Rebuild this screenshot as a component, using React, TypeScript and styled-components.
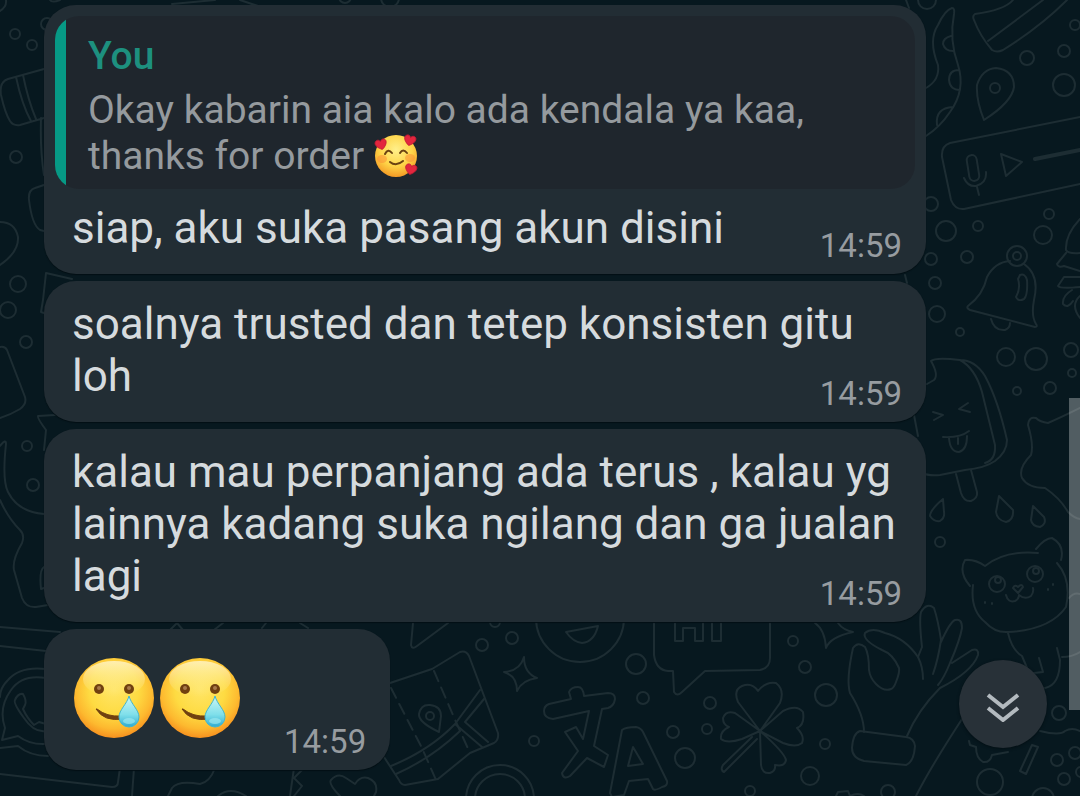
import React from "react";
import styled, { createGlobalStyle } from "styled-components";

const GlobalStyle = createGlobalStyle`
  *, *::before, *::after { box-sizing: border-box; }
  html, body { margin: 0; padding: 0; background: #07181f; }
  body { font-family: Roboto, "Noto Sans", sans-serif; overflow-x: hidden; }
`;

const Page = styled.div`
  position: relative;
  min-height: 100vh;
  overflow: hidden;
  background: #07181f;
`;

const Wallpaper = styled.svg`
  position: absolute;
  top: 0;
  left: 0;
  fill: none;
  stroke: #1d2d33;
  stroke-width: 2;
  stroke-linecap: round;
  stroke-linejoin: round;
`;

const Conversation = styled.main`
  position: relative;
  display: flex;
  flex-direction: column;
  align-items: flex-start;
  gap: 7px;
  padding: 5px 154px 26px 44px;
`;

const Bubble = styled.article`
  max-width: 100%;
  border-radius: 32px;
  background: #222d34;
  box-shadow: 0 1px 1px #030f14;
`;

const Quote = styled.blockquote`
  margin: 11px 11px 0;
  padding: 17px 22px 10px 33px;
  border-radius: 24px;
  background: linear-gradient(to right, #069985 11px, #1f262d 11px);
`;

const Author = styled.cite`
  display: block;
  font-style: normal;
  font-weight: 500;
  font-size: 39px;
  line-height: 46px;
  margin-bottom: 8px;
  color: #1d907f;
`;

const QuoteText = styled.p`
  margin: 0;
  font-size: 39px;
  line-height: 46px;
  color: #959a9e;
`;

const Text = styled.p<{ $afterQuote?: boolean }>`
  display: flow-root;
  margin: 0;
  padding: ${(p) => (p.$afterQuote ? 13 : 17)}px 24px 8px 28px;
  font-size: 44px;
  line-height: 52px;
  color: #d6dbde;
`;

const Time = styled.time<{ $floating?: boolean }>`
  float: ${(p) => (p.$floating ? "right" : "none")};
  margin-top: ${(p) => (p.$floating ? 24 : 0)}px;
  font-size: 33px;
  line-height: 40px;
  color: #979ca0;
`;

const EmojiBody = styled.div`
  display: flex;
  align-items: flex-end;
  gap: 44px;
  padding: 29px 24px 8px 30px;
`;

const EmojiRow = styled.div`
  display: flex;
  gap: 6px;
  margin-bottom: 24px;
`;

const InlineEmoji = styled.svg`
  display: inline-block;
  vertical-align: -9px;
`;

const ScrollThumb = styled.div`
  position: absolute;
  top: 398px;
  right: 0;
  width: 11px;
  height: 312px;
  background: rgba(255, 255, 255, 0.3);
`;

const JumpButton = styled.button`
  position: absolute;
  right: 33px;
  bottom: 48px;
  width: 88px;
  height: 88px;
  display: grid;
  place-items: center;
  padding: 0;
  border: 0;
  border-radius: 50%;
  background: #283138;
  box-shadow: 0 1px 3px #030f14;
  cursor: pointer;
`;

const dots: [number, number, number][] = [
  [15, 34, 5], [32, 45, 5], [16, 157, 6], [18, 284, 8], [8, 310, 8], [26, 342, 6],
  [27, 446, 5], [33, 485, 6], [47, 24, 6], [345, -3, 6], [390, -2, 9],
  [482, 645, 6], [495, 622, 5], [512, 638, 6], [636, 664, 10], [643, 698, 6],
  [710, 703, 6], [673, 732, 6], [707, 729, 5], [685, 758, 10], [534, 741, 5],
  [793, 641, 5], [805, 667, 6], [826, 695, 11], [825, 744, 5], [810, 776, 9],
  [750, 791, 5], [888, 792, 7], [990, 782, 13], [1059, 713, 7], [1057, 760, 6],
  [1075, 753, 6], [1064, 779, 6], [1081, 772, 5], [1043, 799, 11],
  [940, 542, 5], [946, 231, 10], [978, 226, 5], [1049, 214, 5], [1043, 235, 9],
  [967, 257, 6], [931, 259, 6], [935, 283, 6], [937, 314, 8], [960, 332, 4],
  [1006, 357, 9], [1036, 359, 11], [1071, 350, 7], [1072, 373, 4], [1050, 388, 6],
  [1017, 391, 4], [931, 204, 7], [927, 0, 9], [1075, 25, 5], [1027, 58, 7],
  [1064, 51, 6], [1064, 85, 11],
];

const doodles: string[] = [
  // left edge: barrel, blobs, paper corners, ghost
  "M6 0Q7 8 -2 12M44 69L8 79Q-1 82 1 95Q5 113 10 121Q13 126 20 125L44 118M16 77Q22 105 31 121M23 75Q28 100 36 119M41 118Q40 150 44 175",
  "M44 185L35 188Q28 190 29 200Q32 225 40 230L44 231M0 222Q15 222 18 237Q19 252 0 265M43 300L46 273L72 279M43 300L41 312L44 313",
  "M0 347Q5 346 7 350L25 397Q27 404 20 409Q10 415 0 418M55 415L38 416Q37 418 46 430L44 450",
  "M0 446Q6 438 6 444Q2 480 8 492Q18 512 44 514M0 500Q8 518 20 530Q25 535 22 543Q12 560 14 570L22 598Q26 608 36 607L48 605M44 567Q39 570 41 589L44 588",
  // phone bubble in the lower left corner
  "M0 627L60 632M0 646L46 651M46 669Q20 666 8 680Q0 688 0 697M46 678Q22 674 11 690Q-2 708 5 728L2 740L18 736Q30 745 46 744M0 748L18 746Q30 756 48 756",
  "M46 731Q34 733 24 718Q13 703 15 700Q18 693 23 694Q27 701 25 705L23 709Q27 718 34 725L39 722L46 724",
  "M0 774L112 787Q118 787 118 782L120 768M134 768L132 796M215 768Q210 782 200 784Q178 780 172 788L168 796M218 796Q230 786 246 796M294 768L290 796M302 770L294 778L302 786L294 796",
  "M340 796Q328 784 331 780Q338 772 346 778L355 784Q360 776 368 778Q378 782 376 792L374 796",
  "M170 630L177 623L183 630M214 630L223 623M262 628L266 623M300 623L308 628M172 4L215 0M240 0L258 6M50 0Q52 3 60 0",
  // folded map
  "M413 623L411 645Q412 650 417 646L448 623M390 683L432 669L460 652Q466 650 469 656L498 733Q499 740 494 743L470 753L438 779L405 785Q401 785 399 780L384 757",
  "M391 766Q430 750 455 724L480 690M396 774Q432 758 460 731M484 699L465 722L488 742M455 724L482 747",
  "M439 732Q418 722 419 714Q421 704 430 705Q441 706 441 716Z",
  // sparkle, laughing face, greeting bubble
  "M524 657Q524 673 537 678Q522 680 517 691Q517 676 504 672Q520 671 524 657Z",
  "M566 632L598 626Q594 642 582 643Q573 642 566 632Z",
  "M654 623V655Q656 670 668 671H673L674 692Q677 697 682 692L705 671L760 670Q770 668 770 658V623M675 623V641H683V628H695V641H703V623M712 623V641H721V623",
  // translation glyphs
  "M571 699L569 692Q571 687 578 687Q583 687 584 696L608 693Q615 693 615 699Q614 706 608 708L602 709L594 746L608 755L604 767L587 758L570 776Q563 780 562 773L578 751L565 732L576 727L583 739L589 711L553 719Q544 718 544 711Q544 706 549 704Z",
  "M622 730Q626 727 636 727Q641 728 643 732L667 781Q668 786 662 787Q655 791 653 789L648 779L629 781L624 795L612 797L610 793ZM633 747L628 766L643 764Z",
  // clover
  "M760 731L738 702Q733 690 742 686Q752 682 758 691Q766 681 776 683Q785 690 780 703ZM760 731L783 711Q797 704 803 712Q805 725 797 728Q805 736 802 743Q796 748 783 743ZM760 731L735 713Q726 710 723 718Q723 725 729 727Q720 731 721 739Q727 744 742 739ZM760 731L761 765Q762 774 770 773Q776 771 775 765Q785 767 786 760Q784 752 760 731ZM757 739L724 772Q720 770 723 765L752 737",
  "M815 623Q825 630 826 648Q830 637 853 632Q843 630 838 623",
  // OK hand
  "M864 732Q864 715 850 693Q846 680 853 648Q858 641 865 647Q869 654 869 670Q870 678 876 684Q884 692 891 689Q894 688 896 682Q900 672 899 668Q893 654 882 650Q862 640 865 633Q872 627 885 633Q905 638 918 657Q923 667 923 679",
  "M918 657L922 647Q919 620 921 612Q927 602 934 608Q938 620 941 640Q938 660 933 674M941 642Q950 622 955 620Q962 618 962 628Q960 640 950 663Q944 678 938 685M952 663L972 650Q979 648 978 655Q972 672 940 688Q918 710 907 736",
  "M860 731L906 737Q914 738 915 746Q914 762 906 765L864 761Q852 758 852 748Q853 733 860 731ZM916 796Q930 768 964 716",
  "M969 741L970 745L976 747Q976 758 983 762Q990 763 992 755L1008 752M1040 731Q1060 736 1065 731Q1072 727 1080 731M1032 745L1038 747L1026 774L1020 771Z",
  "M836 796L838 792L848 791L850 796Q858 792 864 796",
  // cat
  "M973 585Q970 610 985 622Q995 633 1008 632Q1050 630 1066 607Q1072 580 1057 563M985 566Q975 559 965 560Q958 572 970 586M985 566Q1005 550 1038 553M1036 549Q1045 538 1052 538Q1065 545 1061 560",
  "M1018 593L1013 588Q1015 584 1018 587Q1022 583 1023 587ZM1006 595Q1008 603 1015 601Q1019 599 1019 595Q1025 600 1031 596Q1034 592 1033 588M985 602V603M992 603V604M1048 589V590M1053 584V585",
  "M1008 633Q1012 650 1022 656L1030 675M1057 648L1060 660Q1060 685 1045 688M1039 658L1043 672L1034 673M1062 657Q1072 657 1080 652M1069 598Q1074 592 1080 594",
  // ice lolly
  "M931 361Q935 357 960 360Q975 368 982 392L995 445Q996 460 985 463M960 360Q975 360 985 376Q998 400 1007 440Q1007 452 995 461Q985 468 965 470L940 475Q928 476 922 473M931 361Q939 375 934 380L927 384M914 415L918 436",
  "M933 412L943 415L934 420M968 403L959 409L970 412M943 437Q960 438 969 431M949 438Q950 452 959 452Q967 450 967 436M958 438V444M956 474L961 493Q964 502 971 501Q978 498 977 492L971 470",
  "M943 499Q930 510 930 516Q934 522 940 521Q945 518 944 512ZM999 496L1013 510Q1014 520 1006 522Q997 520 996 512ZM1033 506L1044 517Q1047 524 1040 527Q1032 526 1031 520Z",
  "M1080 408Q1060 418 1048 423Q1040 422 1036 418Q1029 416 1028 425Q1034 445 1031 455Q1018 468 1022 478Q1028 488 1045 488Q1060 498 1068 512Q1074 518 1080 519",
  // bell
  "M1010 261Q995 262 987 277Q983 295 968 306Q966 308 970 310L1035 327Q1038 327 1036 324Q1031 316 1034 300Q1040 275 1024 264M1020 275Q1025 273 1027 280Q1028 295 1024 299Q1018 302 1016 297Q1021 288 1018 279ZM991 319Q994 331 1005 330Q1010 328 1010 323",
  "M1080 219Q1065 235 1066 250Q1068 254 1080 253M1066 253L1057 264Q1058 268 1064 266L1080 271M1080 277H1064L1058 286Q1060 289 1080 287M1072 290Q1062 296 1063 304Q1068 309 1073 301M1080 296Q1070 305 1080 318M905 275L907 283",
  // tentacle, pen, pin
  "M926 88Q940 80 938 65Q928 40 938 25Q945 10 952 8Q955 8 954 14Q949 40 958 65Q966 90 950 112Q940 127 926 136M951 36Q943 38 943 44Q945 51 953 51M959 70Q949 70 949 80Q950 90 960 90M953 107Q935 108 937 125",
  "M1013 0Q1005 10 975 14Q972 16 974 20Q980 36 992 50Q997 53 1003 50Q1040 27 1067 0M988 41L1043 0M984 120Q976 100 977 85Q982 69 996 68Q1014 70 1014 87Q1012 102 984 120ZM906 0L909 8",
  // voice note
  "M1080 117L950 143Q941 146 942 157L951 200Q955 210 964 209L1080 184M964 178Q968 187 976 186Q987 183 986 172M977 187L979 195M1001 154L1022 162L1006 176Z",
];

function WallpaperArt() {
  return (
    <Wallpaper width="1080" height="796" viewBox="0 0 1080 796" aria-hidden="true">
      {dots.map(([x, y, r]) => (
        <circle key={`${x}-${y}`} cx={x} cy={y} r={r} />
      ))}
      {doodles.map((d) => (
        <path key={d} d={d} />
      ))}
      <path d="M434 671L456 722L470 753M391 688L422 748L436 780" strokeDasharray="11 7" />
      <circle cx="430" cy="716" r="4" />
      <circle cx="500" cy="799" r="34" />
      <circle cx="500" cy="799" r="25" />
      <circle cx="580" cy="618" r="44" />
      <circle cx="997" cy="584" r="8" />
      <circle cx="1035" cy="574" r="8" />
      <circle cx="998" cy="580" r="3" />
      <circle cx="1036" cy="571" r="3" />
      <circle cx="1017" cy="256" r="10" />
      <circle cx="1017" cy="256" r="4" />
      <circle cx="995" cy="88" r="5" />
      <rect x="968" y="155" width="10" height="26" rx="5" transform="rotate(-9 973 168)" />
      <path d="M1035 159L1080 150" strokeWidth="4" />
    </Wallpaper>
  );
}

function TearfulSmile({ id }: { id: string }) {
  return (
    <svg width="80" height="80" viewBox="0 0 80 80" role="img" aria-label="Smiling face with tear">
      <defs>
        <radialGradient id={`${id}-face`} cx="0.5" cy="0.4" r="0.62">
          <stop offset="0" stopColor="#ffe566" />
          <stop offset="0.5" stopColor="#fedb42" />
          <stop offset="0.78" stopColor="#fdb92f" />
          <stop offset="1" stopColor="#f68a1c" />
        </radialGradient>
        <linearGradient id={`${id}-shine`} x1="0" y1="0" x2="0" y2="1">
          <stop offset="0" stopColor="#fff6cf" stopOpacity="0.8" />
          <stop offset="1" stopColor="#fff09a" stopOpacity="0" />
        </linearGradient>
        <linearGradient id={`${id}-tear`} x1="0" y1="0" x2="0" y2="1">
          <stop offset="0" stopColor="#cdf7f7" />
          <stop offset="0.6" stopColor="#7fdfea" />
          <stop offset="1" stopColor="#2eabd0" />
        </linearGradient>
      </defs>
      <circle cx="40" cy="40" r="40" fill={`url(#${id}-face)`} />
      <ellipse cx="40" cy="21" rx="31" ry="18" fill={`url(#${id}-shine)`} />
      <circle cx="25" cy="31" r="5" fill="#704010" />
      <circle cx="55" cy="31" r="5" fill="#704010" />
      <circle cx="25" cy="30" r="2" fill="#a97b4b" />
      <circle cx="55" cy="30" r="2" fill="#a97b4b" />
      <path d="M22 51Q30 64 49 61L47 58Q33 59 23 51Z" fill="#704010" stroke="#704010" strokeLinejoin="round" />
      <path d="M55 38C53 46 45 52 45 59A10 10 0 0 0 65 59C65 52 57 46 55 38Z" fill={`url(#${id}-tear)`} stroke="#43b5ce" />
      <ellipse cx="55" cy="63" rx="6" ry="3" fill="#a5edf2" opacity="0.6" />
    </svg>
  );
}

function LovedSmile() {
  const heart = "M0 7C-5 4 -8 0 -7 -3C-5 -7 -1 -6 0 -3C2 -7 7 -6 7 -2C7 1 4 5 0 7Z";
  return (
    <InlineEmoji width="44" height="44" viewBox="0 0 44 44" role="img" aria-label="Smiling face with hearts">
      <defs>
        <radialGradient id="loved-face" cx="0.5" cy="0.35" r="0.65">
          <stop offset="0" stopColor="#fff08b" />
          <stop offset="0.6" stopColor="#fed447" />
          <stop offset="1" stopColor="#f49a25" />
        </radialGradient>
      </defs>
      <circle cx="22" cy="22" r="21" fill="url(#loved-face)" />
      <ellipse cx="8" cy="25" rx="5" ry="4" fill="#f98a35" opacity="0.5" />
      <ellipse cx="36" cy="24" rx="5" ry="4" fill="#f98a35" opacity="0.5" />
      <path d="M11 20Q14 14 18 19M26 19Q29 14 33 19M16 28Q22 33 29 27" fill="none" stroke="#6b4312" strokeWidth="2" strokeLinecap="round" />
      <g fill="#e3263e" stroke="#c01c34">
        <path d={heart} transform="translate(7 10) rotate(-14) scale(0.8)" />
        <path d={heart} transform="translate(36 6) rotate(14) scale(0.8)" />
        <path d={heart} transform="translate(37 35) rotate(14) scale(0.8)" />
      </g>
    </InlineEmoji>
  );
}

function MessageText({ children, afterQuote }: { children: string; afterQuote?: boolean }) {
  return (
    <Text $afterQuote={afterQuote}>
      {children}
      <Time $floating dateTime="14:59">14:59</Time>
    </Text>
  );
}

export default function App() {
  return (
    <Page>
      <GlobalStyle />
      <WallpaperArt />
      <Conversation>
        <Bubble>
          <Quote>
            <Author>You</Author>
            <QuoteText>
              Okay kabarin aia kalo ada kendala ya kaa, thanks for order <LovedSmile />
            </QuoteText>
          </Quote>
          <MessageText afterQuote>siap, aku suka pasang akun disini</MessageText>
        </Bubble>
        <Bubble>
          <MessageText>soalnya trusted dan tetep konsisten gitu loh</MessageText>
        </Bubble>
        <Bubble>
          <MessageText>
            kalau mau perpanjang ada terus , kalau yg lainnya kadang suka ngilang dan ga jualan lagi
          </MessageText>
        </Bubble>
        <Bubble>
          <EmojiBody>
            <EmojiRow>
              <TearfulSmile id="first" />
              <TearfulSmile id="second" />
            </EmojiRow>
            <Time dateTime="14:59">14:59</Time>
          </EmojiBody>
        </Bubble>
      </Conversation>
      <ScrollThumb />
      <JumpButton type="button" aria-label="Scroll to latest message">
        <svg width="36" height="36" viewBox="0 0 36 36" fill="none" stroke="#b3babf" strokeWidth="4" aria-hidden="true">
          <path d="M3 9L18 21L33 9M3 22L18 34L33 22" />
        </svg>
      </JumpButton>
    </Page>
  );
}
